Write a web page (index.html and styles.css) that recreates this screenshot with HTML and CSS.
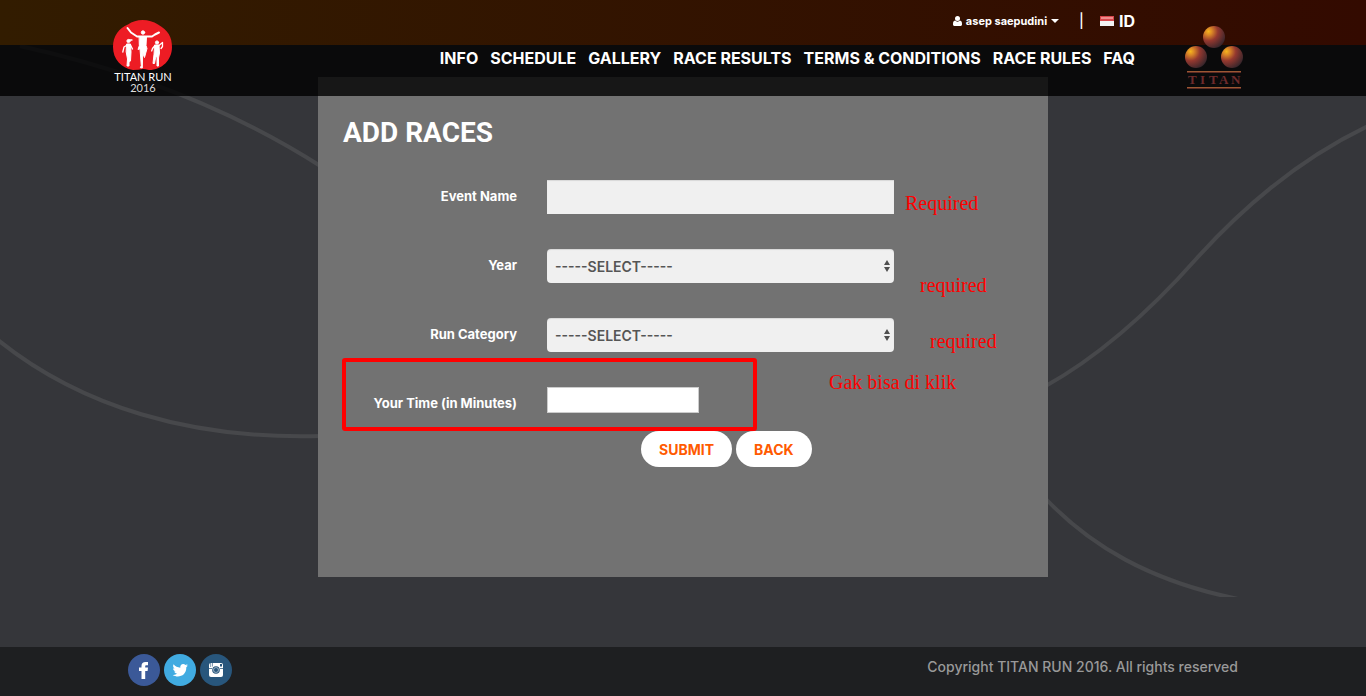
FILE: index.html
```html
<!DOCTYPE html>
<html lang="en">
<head>
<meta charset="utf-8">
<meta name="viewport" content="width=device-width, initial-scale=1">
<title>Titan Run 2016 - Add Races</title>
<link rel="stylesheet" href="styles.css">
</head>
<body>
<svg class="backdrop" viewBox="0 0 1366 597" aria-hidden="true" fill="none" stroke="#47484b" stroke-width="4">
  <path d="M20 46C130 70 230 108 322 167"/>
  <path d="M-2 340C80 406 190 440 322 436"/>
  <path d="M1368 126C1305 156 1246 204 1197 258C1150 311 1100 356 1044 387"/>
  <path d="M1044 497C1090 546 1150 581 1238 599"/>
</svg>

<header class="header">
  <div class="topbar">
    <div class="container topbar-row">
      <button class="user" type="button">
        <svg width="9" height="10" viewBox="0 0 9 10" fill="#fff" aria-hidden="true"><circle cx="4.500" cy="2.600" r="2.500"/><path d="M2 4.600C.6 4.900 0 6 0 8v.6C0 9.500.5 10 1.300 10h6.400C8.500 10 9 9.500 9 8.600V8C9 6 8.400 4.900 7 4.600a3.300 3.300 0 0 1-5 0z"/></svg>
        <span>asep saepudini</span>
        <svg width="8" height="4" viewBox="0 0 8 4" fill="#fff" aria-hidden="true"><path d="M0 0h8L4 4z"/></svg>
      </button>
      <span class="divider">|</span>
      <a class="lang" href="#">
        <svg width="14" height="10" viewBox="0 0 14 10" aria-hidden="true"><path fill="#f3f3f3" d="M0 0h14v10H0z"/><path fill="#d8474b" d="M0 0h14v5H0z"/><path fill="#ee8c8c" d="M1 1h12v2H1z"/></svg>
        <span>ID</span>
      </a>
    </div>
  </div>
  <div class="mainbar">
    <nav class="container nav">
      <a href="#">INFO</a>
      <a href="#">SCHEDULE</a>
      <a href="#">GALLERY</a>
      <a href="#">RACE RESULTS</a>
      <a href="#">TERMS &amp; CONDITIONS</a>
      <a href="#">RACE RULES</a>
      <a href="#">FAQ</a>
    </nav>
  </div>
  <div class="container brands">
    <a class="brand" href="#" aria-label="Titan Run 2016">
      <svg width="60" height="74" viewBox="0 0 60 74" aria-hidden="true">
        <path fill="#ed1c24" d="M15 4.500C23-1.500 36-1.500 45 4.500C55 10 59 17 59 27C59 40 49 50 36 50Q32 49 30 49Q26 50 20 50C8 48 0 39 0 27C0 16 6 8 15 4.500z"/>
        <g fill="#fff" stroke="#fff" stroke-linejoin="round" stroke-linecap="round">
          <circle cx="30" cy="12.500" r="1.700"/>
          <path stroke-width="2" fill="none" d="M14.500 8L18 12.500L24 16.500L30 16.500L39 16.500L42 14.500L46 12.500"/>
          <path stroke-width="1" d="M26.500 16.500h7l-.5 9l1 3l-2.500 9l-.5-1l-1.300-4l-.4 15.500l-2-.3l1-2l-1.300-17l-2 .8l1.200-3.500z"/>
          <circle cx="15.500" cy="21" r="1.600"/>
          <path stroke-width="1" d="M14 24h3.500l.5 8l-.5 9l-1.500 1v4h-2l.5-7l-1.300-7z"/>
          <path stroke-width="1.300" fill="none" d="M15 24.500l-4 2.500l-1.200 5M17.500 25l2 4M16 20h3"/>
          <circle cx="44" cy="22.500" r="1.600"/>
          <path stroke-width="1" d="M42 25h4l.5 8l-1 5v8h-1.500v-10l-1.500 2l-1 5.500h-1.500l1-9z"/>
          <path stroke-width="1.300" fill="none" d="M42 25.500l-2.500 3l-.8 2.500M46 25.500l3.500-3v4l-1.500 2"/>
        </g>
        <text class="brand-name" x="30" y="61" text-anchor="middle">TITAN RUN</text>
        <text class="brand-year" x="30" y="72" text-anchor="middle">2016</text>
      </svg>
    </a>
    <a class="sponsor" href="#" aria-label="Titan">
      <svg width="58" height="64" viewBox="0 0 58 64" aria-hidden="true">
        <defs>
          <radialGradient id="ball" cx=".25" cy=".25" r=".85"><stop offset="0" stop-color="#f5b51c"/><stop offset=".2" stop-color="#d88427"/><stop offset=".5" stop-color="#94382f"/><stop offset="1" stop-color="#35252b"/></radialGradient>
        </defs>
        <g fill="url(#ball)"><circle cx="29" cy="11" r="11"/><circle cx="11" cy="31" r="11"/><circle cx="47" cy="31" r="11"/></g>
        <path fill="#9c5833" d="M2 45h54v1H2zM2 61h54v1H2z"/>
        <path fill="#5c2a24" d="M2 46h54v1H2zM2 62h54v1H2z"/>
        <text class="sponsor-name" x="3 15 24 34 46" y="58">TITAN</text>
      </svg>
    </a>
  </div>
</header>

<main class="main">
  <section class="panel">
    <h1 class="title">ADD RACES</h1>
    <form class="form">
      <div class="row">
        <label for="event">Event Name</label>
        <input class="control" id="event" type="text">
      </div>
      <div class="row">
        <label for="year">Year</label>
        <div class="select">
          <select class="control" id="year"><option>-----SELECT-----</option></select>
          <svg class="arrows" width="6" height="12" viewBox="0 0 6 12" fill="#4f4f4f" aria-hidden="true"><path d="M3 0l3 5H0zM3 12l3-5H0z"/></svg>
        </div>
      </div>
      <div class="row">
        <label for="category">Run Category</label>
        <div class="select">
          <select class="control" id="category"><option>-----SELECT-----</option></select>
          <svg class="arrows" width="6" height="12" viewBox="0 0 6 12" fill="#4f4f4f" aria-hidden="true"><path d="M3 0l3 5H0zM3 12l3-5H0z"/></svg>
        </div>
      </div>
      <div class="row">
        <label for="time">Your Time (in Minutes)</label>
        <input class="time" id="time" type="text">
      </div>
      <div class="actions">
        <button class="pill" type="submit">SUBMIT</button>
        <button class="pill" type="button">BACK</button>
      </div>
    </form>
    <span class="note note-event">Required</span>
    <span class="note note-year">required</span>
    <span class="note note-category">required</span>
    <span class="note note-time">Gak bisa di klik</span>
    <div class="highlight"></div>
  </section>
</main>

<footer class="footer">
  <div class="container footer-row">
    <div class="social">
      <a href="#" aria-label="Facebook"><svg width="32" height="32" viewBox="0 0 32 32"><circle cx="16" cy="16" r="16" fill="#3b5998"/><path fill="#fff" d="M13.500 25v-8H11v-3.500h2.500V12c0-2.700 1.500-4 4-4H20v3.300h-1.500c-1 0-1.300.4-1.300 1.200v1H20l-.4 3.500h-2.400v8z"/></svg></a>
      <a href="#" aria-label="Twitter"><svg width="32" height="32" viewBox="0 0 32 32"><circle cx="16" cy="16" r="16" fill="#41abe1"/><path fill="#fff" d="M24 11.500l-1.800.5c.7-.4 1.100-1 1.300-1.700l-2 .8c-2-2.200-5.700-.8-5.200 2.600c-2.700-.1-5-1.300-6.700-3.400c-1 1.700-.4 3.400 1 4.300c-.5 0-1-.2-1.500-.4c0 1.700 1 2.800 2.600 3.200h-1.400c.4 1.300 1.500 2.200 3 2.200c-1.200 1-2.800 1.500-4.600 1.300c5.600 3.500 13.800.8 13.600-7.700z"/></svg></a>
      <a href="#" aria-label="Instagram"><svg width="32" height="32" viewBox="0 0 32 32"><circle cx="16" cy="16" r="16" fill="#28567c"/><rect x="9" y="9" width="14" height="14" rx="2" fill="#fff"/><path fill="#28567c" d="M9 14h3v.8H9zM20 14h3v.8h-3zM20 10h2v2.500h-2zM10.500 9h.6v4h-.6zM12 9h.6v3.500H12z"/><circle cx="16" cy="16" r="3.800" fill="#28567c"/><circle cx="16" cy="16" r="2.800" fill="#a9bccb"/><circle cx="16" cy="16" r="2" fill="#28567c"/></svg></a>
    </div>
    <p class="copyright">Copyright TITAN RUN 2016. All rights reserved</p>
  </div>
</footer>
</body>
</html>
```
FILE: styles.css
```css
* {
  box-sizing: border-box;
}

body {
  margin: 0;
  min-height: 100vh;
  display: flex;
  flex-direction: column;
  position: relative;
  background: #35363a;
  color: #fff;
  font-family: Inter, "Open Sans", sans-serif;
  font-size: 14px;
}

a {
  color: inherit;
  text-decoration: none;
}

svg {
  display: block;
}

.container {
  width: 100%;
  max-width: 1170px;
  margin: 0 auto;
}

.backdrop {
  position: absolute;
  top: 0;
  left: 0;
  width: 100%;
}

/* Header floats over the page content */
.header {
  position: absolute;
  z-index: 2;
  top: 0;
  left: 0;
  right: 0;
}

.topbar {
  background: linear-gradient(to right, #321c00, #330a00);
}

.topbar-row {
  display: flex;
  align-items: center;
  justify-content: flex-end;
  height: 45px;
  padding: 0 133px 4px 15px;
}

.user {
  display: flex;
  align-items: center;
  gap: 4px;
  padding: 0;
  border: 0;
  background: none;
  color: inherit;
  font: 700 11px/16px Inter, sans-serif;
}

.divider {
  margin: 0 16px 0 20px;
  font-weight: 500;
}

.lang {
  display: flex;
  align-items: center;
  gap: 5px;
  font-size: 16px;
  font-weight: 700;
}

.mainbar {
  background: rgba(0, 0, 0, 0.8);
}

.nav {
  display: flex;
  justify-content: flex-end;
  gap: 12px;
  height: 51px;
  padding: 3px 133px 0 120px;
  font-size: 16px;
  font-weight: 700;
  line-height: 20px;
  white-space: nowrap;
}

.brands {
  position: absolute;
  top: 20px;
  left: 0;
  right: 0;
  display: flex;
  justify-content: space-between;
  padding: 0 25px 0 15px;
  pointer-events: none;
}

.sponsor {
  padding-top: 6px;
}

.brand-name {
  fill: #fff;
  font: 11px Lato, sans-serif;
}

.brand-year {
  fill: #ddd;
  font: 11px Lato, sans-serif;
}

.sponsor-name {
  fill: #6e2a2c;
  font: 700 13px "Liberation Serif", serif;
}

/* Form panel */
.main {
  flex: 1;
  padding: 77px 16px 70px;
}

.panel {
  position: relative;
  max-width: 730px;
  min-height: 500px;
  margin: 0 auto;
  padding: 36px 25px 24px;
  background: #727272;
}

.title {
  margin: 0 0 27px;
  font: 700 28px/40px Roboto, sans-serif;
}

.row {
  display: grid;
  grid-template-columns: 30% 51%;
  height: 34px;
  margin-bottom: 35px;
}

.row label {
  padding-right: 30px;
  font-size: 13px;
  font-weight: 700;
  line-height: 32px;
  text-align: right;
}

.control {
  width: 100%;
  height: 34px;
  padding: 0 8px;
  border: 0;
  border-radius: 0;
  background: #f0f0f0;
  box-shadow: inset 0 1px 1px rgba(0, 0, 0, 0.1);
  color: #555;
  font: 600 14px Inter, sans-serif;
}

.select {
  position: relative;
}

.select .control {
  appearance: none;
  border-radius: 4px;
}

.arrows {
  position: absolute;
  top: 11px;
  right: 4px;
  pointer-events: none;
}

.time {
  width: 152px;
  height: 26px;
  border: 1px solid #ccc;
  background: #fff;
}

.actions {
  display: flex;
  gap: 4px;
  margin: -25px 0 0 298px;
}

.pill {
  height: 36px;
  padding: 0 18px;
  border: 0;
  border-radius: 18px;
  background: #fff;
  color: #ff5a00;
  font: 700 14px Inter, sans-serif;
}

/* Review annotations drawn over the form */
.note {
  position: absolute;
  color: #f00;
  font: 20px/24px "Liberation Serif", serif;
}

.note-event {
  top: 114px;
  left: 587px;
}

.note-year {
  top: 196px;
  left: 602px;
}

.note-category {
  top: 252px;
  left: 612px;
}

.note-time {
  top: 293px;
  left: 511px;
}

.highlight {
  position: absolute;
  top: 281px;
  left: 24px;
  width: 415px;
  height: 73px;
  border: 4px solid #f00;
  border-radius: 3px;
  pointer-events: none;
}

.footer {
  background: #1e1f21;
}

.footer-row {
  display: flex;
  justify-content: space-between;
  padding: 7px 30px 10px;
}

.social {
  display: flex;
  gap: 4px;
}

.copyright {
  margin: 3px 0 0;
  color: #999;
  font-weight: 500;
  line-height: 20px;
}
```
